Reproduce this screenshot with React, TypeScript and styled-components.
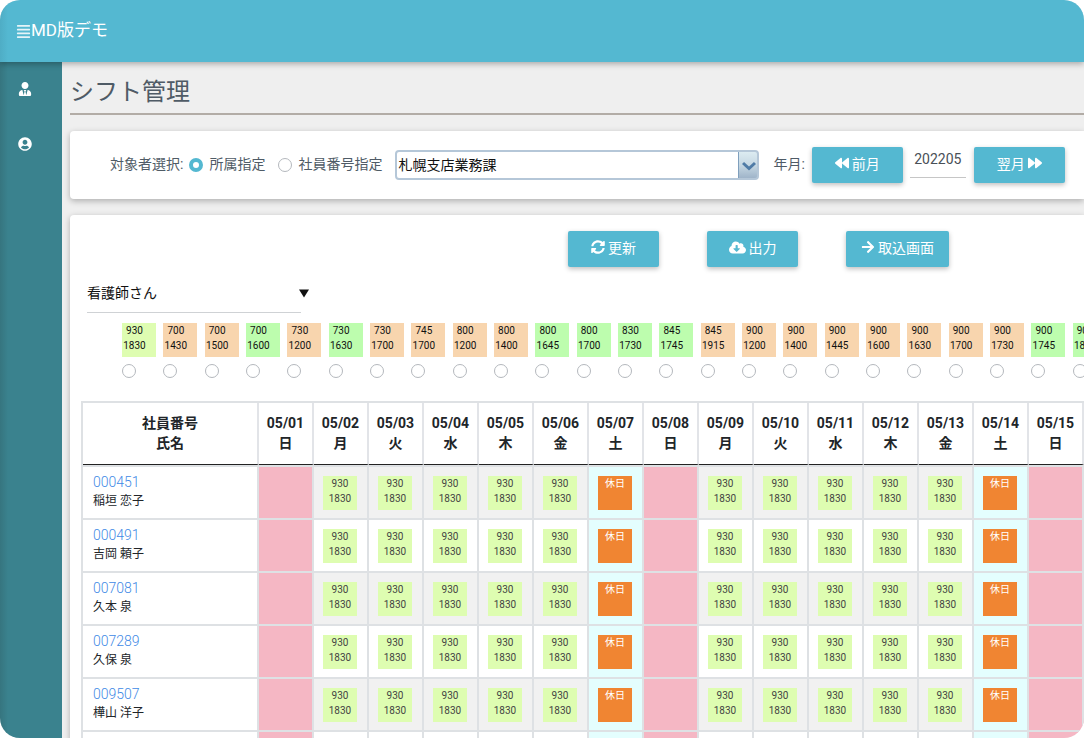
import React from "react";
import styled, { createGlobalStyle } from "styled-components";
import {
  FaAlignJustify,
  FaArrowRight,
  FaBackward,
  FaCloudDownloadAlt,
  FaForward,
  FaSyncAlt,
  FaUserCircle,
  FaUserTie,
} from "react-icons/fa";

const GlobalStyle = createGlobalStyle`
  *, *::before, *::after { box-sizing: border-box; }
  body {
    margin: 0;
    background: #fff;
    color: #212529;
    font-family: Roboto, "Noto Sans CJK JP", sans-serif;
    font-size: 14px;
  }
  button, input, select { font: inherit; }
`;

const Frame = styled.div`
  display: flex;
  flex-direction: column;
  height: 100vh;
  overflow: hidden;
  border-radius: 20px;
  background: #efefef;
`;

const Header = styled.header`
  flex: none;
  position: relative;
  z-index: 2;
  display: flex;
  align-items: center;
  height: 62px;
  padding: 0 16px 3px;
  background: linear-gradient(90deg, #4fadc5, #54b8d1 8px);
  box-shadow: 0 2px 6px rgba(0, 0, 0, 0.3);
  color: #fff;
`;

const MenuButton = styled.button`
  display: flex;
  padding: 4px 0 0;
  border: 0;
  background: none;
  color: inherit;
  font-size: 15px;
`;

const MenuLines = styled(FaAlignJustify)`
  opacity: 0.85;
`;

const Brand = styled.a`
  color: inherit;
  font-size: 17px;
  line-height: 24px;
  text-decoration: none;
`;

const Body = styled.div`
  flex: 1;
  min-height: 0;
  display: flex;
`;

const Sidebar = styled.nav`
  flex: none;
  display: flex;
  flex-direction: column;
  gap: 41px;
  width: 62px;
  padding: 20px 18px;
  background: linear-gradient(90deg, #36757f, #3a828e 8px);
`;

const SideLink = styled.a`
  display: flex;
  color: #fff;
  font-size: 14px;
`;

const Main = styled.main`
  flex: 1;
  min-width: 0;
  padding-left: 8px;
  overflow: hidden;
`;

const Title = styled.h1`
  margin: 0 0 16px;
  padding: 13px 0 3px;
  border-bottom: 2px solid #b2aca6;
  color: #4f5b66;
  font-size: 24px;
  font-weight: 400;
  line-height: 35px;
`;

const Card = styled.section`
  margin-bottom: 16px;
  border-radius: 4px 0 0 4px;
  background: #fff;
  box-shadow: 0 2px 6px rgba(0, 0, 0, 0.28);
`;

const FilterBar = styled(Card)`
  display: flex;
  align-items: center;
  height: 68px;
  padding-left: 40px;
  color: #4f5b66;
  white-space: nowrap;
`;

const Targets = styled.fieldset`
  display: flex;
  align-items: center;
  margin: 0;
  padding: 0;
  border: 0;
`;

const Caption = styled.span`
  padding-bottom: 4px;
`;

const RadioLabel = styled.label`
  display: flex;
  align-items: center;
  gap: 6px;
  margin-left: 6px;
  & + & { margin-left: 13px; }
`;

const Radio = styled.input.attrs({ type: "radio" })`
  appearance: none;
  width: 14px;
  height: 14px;
  margin: 0;
  border: 1px solid #b4b8bd;
  border-radius: 50%;
  background: #fff;
  &:checked { border: 4px solid #54b8d1; }
`;

const DeptBox = styled.div`
  position: relative;
  flex: 0 1 364px;
  margin: 0 14px 0 13px;
`;

const DeptSelect = styled.select`
  appearance: none;
  display: block;
  width: 100%;
  height: 30px;
  padding: 0 24px 0 1px;
  border: 2px solid #b5c7d8;
  border-radius: 4px;
  background:
    linear-gradient(#7f9fbd, #7f9fbd) right 18px top / 1px 100% no-repeat,
    linear-gradient(#dcebf1, #c6d8e3 50%, #9fb4c9) right / 18px 100% no-repeat,
    #fff;
  color: #111;
`;

const Chevron = styled.svg`
  position: absolute;
  right: 3px;
  top: 11px;
  pointer-events: none;
`;

const MonthInput = styled.input`
  width: 56px;
  height: 32px;
  margin: 0 8px 6px 7px;
  padding: 0 0 6px;
  border: 0;
  border-bottom: 1px solid #c6c6c6;
  background: none;
  color: #495057;
  text-align: center;
`;

const Button = styled.button<{ $wide?: boolean }>`
  display: flex;
  align-items: center;
  justify-content: center;
  gap: 3px;
  width: ${(p) => (p.$wide ? 103 : 91)}px;
  height: 36px;
  padding: 0 0 4px;
  border: 0;
  border-radius: 2px;
  background: #54b8d1;
  box-shadow: 0 2px 5px rgba(0, 0, 0, 0.25);
  color: #fff;
  white-space: nowrap;
`;

const MonthLabel = styled.label`
  margin-right: 7px;
  padding-bottom: 4px;
`;

const Panel = styled(Card)`
  padding: 16px 0 0 11px;
`;

const Actions = styled.div`
  display: flex;
  gap: 48px;
  padding-left: 487px;
`;

const RoleBox = styled.div`
  position: relative;
  width: 222px;
  margin: 9px 0 10px 6px;
`;

const RoleSelect = styled.select`
  appearance: none;
  display: block;
  width: 214px;
  height: 37px;
  padding: 0 0 3px;
  border: 0;
  border-bottom: 1px solid #cfd2d5;
  background: none;
  color: #111;
`;

const Caret = styled.svg`
  position: absolute;
  right: 0;
  top: 13px;
  pointer-events: none;
`;

const Palette = styled.div`
  display: grid;
  grid-template-columns: repeat(24, 1fr);
  width: 992px;
  margin-left: 41px;
`;

const PaletteItem = styled.label`
  display: flex;
  flex-direction: column;
  gap: 7px;
`;

const tones = {
  lime: "#defdb1",
  peach: "#f8d5ae",
  green: "#bdfdae",
  off: "#f08532",
};

type Tone = keyof typeof tones;

const Chip = styled.span<{ $tone: Tone }>`
  display: block;
  width: 34px;
  height: 34px;
  background: ${(p) => tones[p.$tone]};
  color: ${(p) => (p.$tone === "off" ? "#fff" : "#444")};
  font-size: 10px;
  line-height: 15px;
  text-align: center;
`;

const PaletteChip = styled(Chip)`
  padding-right: 9px;
  color: #111;
`;

const Table = styled.table`
  table-layout: fixed;
  width: 100%;
  margin-top: 23px;
  border-collapse: separate;
  border-spacing: 0;
  border: 2px solid #dee1e4;
  border-width: 2px 0 0 2px;
`;

const NameCol = styled.col`
  width: 176px;
`;

const HeadCell = styled.th`
  height: 62px;
  padding: 0 0 2px;
  border-right: 2px solid #e2e4e8;
  border-bottom: 1px solid #222;
  font-weight: 700;
  line-height: 20px;
`;

const HeadText = styled.span`
  display: block;
`;

const NameCell = styled.td`
  height: 53px;
  padding: 0 0 2px 10px;
  border: 0 solid #dee1e4;
  border-width: 2px 2px 0 0;
  background: #fff;
  font-size: 12px;
  line-height: 19px;
`;

const StaffLink = styled.a`
  display: block;
  color: #3f8ae6;
  font-size: 14px;
  font-weight: 300;
  text-decoration: none;
`;

const DayCell = styled.td<{ $kind: string; $odd: boolean }>`
  height: 53px;
  padding: 0 0 0 9px;
  border: 0 solid #dee1e4;
  border-width: 2px 2px 0 0;
  background: ${(p) =>
    p.$kind === "日" ? "#f5b7c4" : p.$kind === "土" ? "#e4fefe" : p.$odd ? "#f1f1f1" : "#fff"};
`;

const WEEK = ["日", "月", "火", "水", "木", "金", "土"];
const DAYS = Array.from({ length: 15 }, (_, i) => ({
  date: `05/${String(i + 1).padStart(2, "0")}`,
  day: WEEK[i % 7],
}));

const STAFF = [
  ["000451", "稲垣 恋子"],
  ["000491", "吉岡 頼子"],
  ["007081", "久本 泉"],
  ["007289", "久保 泉"],
  ["009507", "樺山 洋子"],
  ["", ""],
];

const SHIFTS: [string, string, Tone][] = [
  ["930", "1830", "lime"],
  ["700", "1430", "peach"],
  ["700", "1500", "peach"],
  ["700", "1600", "green"],
  ["730", "1200", "peach"],
  ["730", "1630", "green"],
  ["730", "1700", "peach"],
  ["745", "1700", "peach"],
  ["800", "1200", "peach"],
  ["800", "1400", "peach"],
  ["800", "1645", "green"],
  ["800", "1700", "green"],
  ["830", "1730", "green"],
  ["845", "1745", "green"],
  ["845", "1915", "peach"],
  ["900", "1200", "peach"],
  ["900", "1400", "peach"],
  ["900", "1445", "peach"],
  ["900", "1600", "peach"],
  ["900", "1630", "peach"],
  ["900", "1700", "peach"],
  ["900", "1730", "peach"],
  ["900", "1745", "green"],
  ["900", "1800", "green"],
];

function DayShift({ day }: { day: string }) {
  if (day === "日") return null;
  if (day === "土") return <Chip $tone="off">休日</Chip>;
  return (
    <Chip $tone="lime">
      930
      <br />
      1830
    </Chip>
  );
}

export default function App() {
  return (
    <Frame lang="ja">
      <GlobalStyle />
      <Header>
        <MenuButton type="button" aria-label="メニュー">
          <MenuLines />
        </MenuButton>
        <Brand href="#">MD版デモ</Brand>
      </Header>
      <Body>
        <Sidebar>
          <SideLink href="#" aria-label="社員">
            <FaUserTie />
          </SideLink>
          <SideLink href="#" aria-label="アカウント">
            <FaUserCircle />
          </SideLink>
        </Sidebar>
        <Main>
          <Title>シフト管理</Title>
          <FilterBar>
            <Targets>
              <Caption>対象者選択:</Caption>
              <RadioLabel>
                <Radio name="target" defaultChecked />
                <Caption>所属指定</Caption>
              </RadioLabel>
              <RadioLabel>
                <Radio name="target" />
                <Caption>社員番号指定</Caption>
              </RadioLabel>
            </Targets>
            <DeptBox>
              <DeptSelect aria-label="所属">
                <option>札幌支店業務課</option>
              </DeptSelect>
              <Chevron width="14" height="10" viewBox="0 0 14 10" fill="none">
                <path d="M1 2 7 7.500 13 2" stroke="#4f7ba6" strokeWidth="3" />
              </Chevron>
            </DeptBox>
            <MonthLabel htmlFor="month">年月:</MonthLabel>
            <Button type="button">
              <FaBackward />
              前月
            </Button>
            <MonthInput id="month" defaultValue="202205" />
            <Button type="button">
              翌月
              <FaForward />
            </Button>
          </FilterBar>
          <Panel>
            <Actions>
              <Button type="button">
                <FaSyncAlt />
                更新
              </Button>
              <Button type="button">
                <FaCloudDownloadAlt size={17} />
                出力
              </Button>
              <Button type="button" $wide>
                <FaArrowRight />
                取込画面
              </Button>
            </Actions>
            <RoleBox>
              <RoleSelect aria-label="職種">
                <option>看護師さん</option>
              </RoleSelect>
              <Caret width="10" height="9" viewBox="0 0 10 9">
                <path d="M0 0.500h10L5 8.500z" fill="#111" />
              </Caret>
            </RoleBox>
            <Palette>
              {SHIFTS.map(([start, end, tone]) => (
                <PaletteItem key={start + end}>
                  <PaletteChip $tone={tone}>
                    {start}
                    <br />
                    {end}
                  </PaletteChip>
                  <Radio name="shift" />
                </PaletteItem>
              ))}
            </Palette>
            <Table>
              <colgroup>
                <NameCol />
                {DAYS.map((d) => (
                  <col key={d.date} />
                ))}
              </colgroup>
              <thead>
                <tr>
                  <HeadCell scope="col">
                    <HeadText>社員番号</HeadText>
                    <HeadText>氏名</HeadText>
                  </HeadCell>
                  {DAYS.map((d) => (
                    <HeadCell key={d.date} scope="col">
                      <HeadText>{d.date}</HeadText>
                      <HeadText>{d.day}</HeadText>
                    </HeadCell>
                  ))}
                </tr>
              </thead>
              <tbody>
                {STAFF.map(([id, name], row) => (
                  <tr key={row}>
                    <NameCell>
                      {id && <StaffLink href="#">{id}</StaffLink>}
                      {name}
                    </NameCell>
                    {DAYS.map((d) => (
                      <DayCell key={d.date} $kind={d.day} $odd={row % 2 === 0}>
                        {id && <DayShift day={d.day} />}
                      </DayCell>
                    ))}
                  </tr>
                ))}
              </tbody>
            </Table>
          </Panel>
        </Main>
      </Body>
    </Frame>
  );
}
